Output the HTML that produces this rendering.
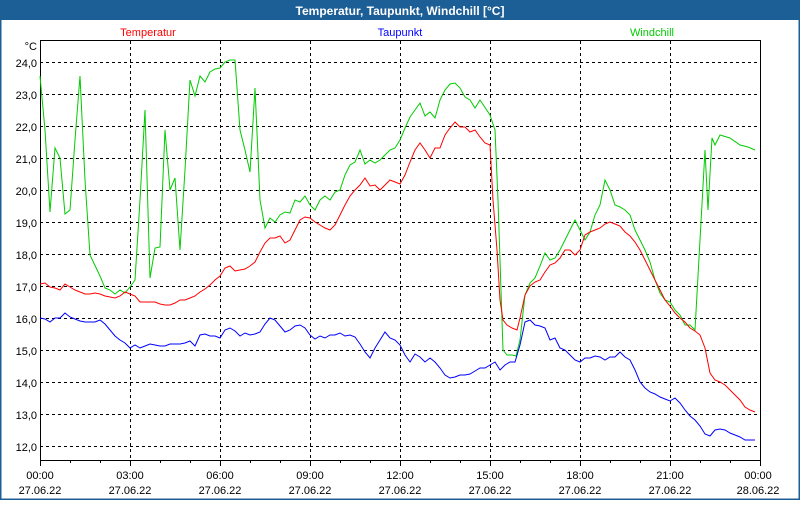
<!DOCTYPE html>
<html><head><meta charset="utf-8"><style>
html,body{margin:0;padding:0;background:#fff;}
body{width:800px;height:500px;overflow:hidden;font-family:"Liberation Sans","DejaVu Sans",sans-serif;}
</style></head><body>
<svg width="800" height="500" xmlns="http://www.w3.org/2000/svg" font-family="Liberation Sans, DejaVu Sans, sans-serif">
<rect x="0" y="0" width="800" height="500" fill="#fff"/>
<rect x="0.5" y="0.5" width="799" height="499" fill="none" stroke="#1c5e96" stroke-width="2"/>
<rect x="0" y="0" width="800" height="20" fill="#1c5e96"/>
<text x="400" y="15" text-anchor="middle" fill="#fff" font-size="12" font-weight="bold">Temperatur, Taupunkt, Windchill [°C]</text>
<text x="148" y="36" text-anchor="middle" fill="#ff0000" font-size="11">Temperatur</text>
<text x="400" y="36" text-anchor="middle" fill="#0000ff" font-size="11">Taupunkt</text>
<text x="652" y="36" text-anchor="middle" fill="#00cc00" font-size="11">Windchill</text>
<g stroke="#000" stroke-width="1" stroke-dasharray="3,3">
<line x1="40" y1="62.5" x2="760" y2="62.5"/><line x1="40" y1="94.5" x2="760" y2="94.5"/><line x1="40" y1="126.5" x2="760" y2="126.5"/><line x1="40" y1="158.5" x2="760" y2="158.5"/><line x1="40" y1="190.5" x2="760" y2="190.5"/><line x1="40" y1="222.5" x2="760" y2="222.5"/><line x1="40" y1="254.5" x2="760" y2="254.5"/><line x1="40" y1="286.5" x2="760" y2="286.5"/><line x1="40" y1="318.5" x2="760" y2="318.5"/><line x1="40" y1="350.5" x2="760" y2="350.5"/><line x1="40" y1="382.5" x2="760" y2="382.5"/><line x1="40" y1="414.5" x2="760" y2="414.5"/><line x1="40" y1="446.5" x2="760" y2="446.5"/>
<line x1="130.5" y1="41" x2="130.5" y2="460"/><line x1="220.5" y1="41" x2="220.5" y2="460"/><line x1="310.5" y1="41" x2="310.5" y2="460"/><line x1="400.5" y1="41" x2="400.5" y2="460"/><line x1="490.5" y1="41" x2="490.5" y2="460"/><line x1="580.5" y1="41" x2="580.5" y2="460"/><line x1="670.5" y1="41" x2="670.5" y2="460"/>
</g>
<rect x="40.5" y="40.5" width="720" height="420" fill="none" stroke="#000"/>
<g stroke="#000">
<line x1="40.5" y1="460" x2="40.5" y2="466"/><line x1="70.5" y1="460" x2="70.5" y2="463"/><line x1="100.5" y1="460" x2="100.5" y2="463"/><line x1="130.5" y1="460" x2="130.5" y2="466"/><line x1="160.5" y1="460" x2="160.5" y2="463"/><line x1="190.5" y1="460" x2="190.5" y2="463"/><line x1="220.5" y1="460" x2="220.5" y2="466"/><line x1="250.5" y1="460" x2="250.5" y2="463"/><line x1="280.5" y1="460" x2="280.5" y2="463"/><line x1="310.5" y1="460" x2="310.5" y2="466"/><line x1="340.5" y1="460" x2="340.5" y2="463"/><line x1="370.5" y1="460" x2="370.5" y2="463"/><line x1="400.5" y1="460" x2="400.5" y2="466"/><line x1="430.5" y1="460" x2="430.5" y2="463"/><line x1="460.5" y1="460" x2="460.5" y2="463"/><line x1="490.5" y1="460" x2="490.5" y2="466"/><line x1="520.5" y1="460" x2="520.5" y2="463"/><line x1="550.5" y1="460" x2="550.5" y2="463"/><line x1="580.5" y1="460" x2="580.5" y2="466"/><line x1="610.5" y1="460" x2="610.5" y2="463"/><line x1="640.5" y1="460" x2="640.5" y2="463"/><line x1="670.5" y1="460" x2="670.5" y2="466"/><line x1="700.5" y1="460" x2="700.5" y2="463"/><line x1="730.5" y1="460" x2="730.5" y2="463"/><line x1="760.5" y1="460" x2="760.5" y2="466"/>
</g>
<g font-size="11" fill="#000" text-anchor="end">
<text x="37" y="50">°C</text>
<text x="37" y="67">24,0</text><text x="37" y="99">23,0</text><text x="37" y="131">22,0</text><text x="37" y="163">21,0</text><text x="37" y="195">20,0</text><text x="37" y="227">19,0</text><text x="37" y="259">18,0</text><text x="37" y="291">17,0</text><text x="37" y="323">16,0</text><text x="37" y="355">15,0</text><text x="37" y="387">14,0</text><text x="37" y="419">13,0</text><text x="37" y="451">12,0</text>
</g>
<g font-size="11" fill="#000" text-anchor="middle">
<text x="40" y="479">00:00</text><text x="40" y="494">27.06.22</text>
<text x="130" y="479">03:00</text><text x="130" y="494">27.06.22</text>
<text x="220" y="479">06:00</text><text x="220" y="494">27.06.22</text>
<text x="310" y="479">09:00</text><text x="310" y="494">27.06.22</text>
<text x="400" y="479">12:00</text><text x="400" y="494">27.06.22</text>
<text x="490" y="479">15:00</text><text x="490" y="494">27.06.22</text>
<text x="580" y="479">18:00</text><text x="580" y="494">27.06.22</text>
<text x="670" y="479">21:00</text><text x="670" y="494">27.06.22</text>
<text x="758" y="479">00:00</text><text x="758" y="494">28.06.22</text>
</g>
<polyline fill="none" stroke="#00cc00" stroke-width="1" points="40,76 45,130 50,212 55,148 60,158 65,214 70,210 75,140 80,76 85,180 90,255 100,276 105,288 110,290 115,294 120,290 125,293 130,287 135,280 140,200 145,110 150,278 155,248 160,247 165,130 170,190 175,178 180,250 185,170 190,80 195,96 200,76 205,82 210,72 215,69 220,68 225,62 230,60 235,60 240,130 245,150 250,172 255,88 260,200 265,228 270,218 275,222 280,215 285,212 290,213 295,200 300,202 305,196 310,205 315,210 320,200 325,196 330,200 335,192 340,190 345,175 350,165 355,162 360,150 365,164 370,160 375,163 380,160 385,155 390,150 395,148 400,140 405,128 410,117 415,110 420,103 425,116 430,112 435,118 440,100 445,90 450,84 455,83 460,88 465,97 470,100 475,108 480,100 490,115 495,130 498,200 500,260 503,350 507,355 512,355 516,356 520,340 525,295 530,283 535,278 540,266 545,253 550,260 555,258 560,250 565,240 570,230 575,220 580,230 585,240 590,232 595,215 600,205 605,180 610,190 615,205 620,207 625,210 630,215 635,230 640,240 645,250 650,262 655,280 660,293 665,300 670,302 675,310 680,315 685,325 690,325 695,330 700,240 705,150 708,210 712,138 715,145 720,135 730,138 740,145 748,147 755,150"/>
<polyline fill="none" stroke="#ff0000" stroke-width="1" points="40,284 45,283 50,287 55,288 60,290 65,284 70,287 75,290 80,292 85,294 90,294 95,293 100,294 105,296 110,297 115,298 120,296 125,292 130,294 135,296 140,302 145,302 150,302 155,302 160,304 165,305 170,305 175,303 180,300 185,300 190,298 195,296 200,292 205,289 210,285 215,280 220,276 225,268 230,266 235,271 240,270 245,269 250,266 255,262 260,252 265,243 270,238 275,238 280,236 285,243 290,240 295,230 300,220 305,217 310,218 315,222 320,225 325,228 330,230 335,225 340,215 345,205 350,196 355,190 360,185 365,178 370,186 375,185 380,190 385,185 390,180 395,182 400,184 405,175 410,162 415,150 420,143 425,150 430,158 435,148 440,148 445,135 450,128 455,122 460,127 465,127 470,132 475,130 480,137 485,143 490,145 493,200 497,250 500,300 503,320 507,325 512,328 517,330 520,318 525,295 530,286 535,282 540,280 545,272 550,265 555,263 560,258 565,250 570,250 575,255 580,250 585,235 590,232 595,230 600,228 605,224 610,222 615,224 620,226 625,232 630,236 635,242 640,250 645,260 650,270 655,280 660,290 665,300 670,306 675,313 680,318 685,322 690,328 695,331 700,335 705,348 710,373 715,380 720,382 725,385 730,390 735,395 740,400 745,407 750,410 755,412"/>
<polyline fill="none" stroke="#0000ff" stroke-width="1" points="40,318 45,319 50,322 55,318 60,318 65,313 70,317 75,319 80,321 85,322 90,322 95,322 100,320 105,324 110,330 115,336 120,340 125,343 130,348 135,345 140,348 145,346 150,344 155,345 160,346 165,346 170,344 175,344 180,344 185,343 190,341 195,346 200,335 205,334 210,336 215,336 220,338 225,330 230,328 235,331 240,336 245,333 250,335 255,334 260,332 265,324 270,318 275,320 280,326 285,332 290,330 295,326 300,325 305,328 310,335 315,339 320,336 325,338 330,335 335,335 340,333 345,336 350,335 355,337 360,344 365,352 370,358 375,348 380,340 385,332 390,338 395,340 400,345 405,355 410,362 415,354 420,357 425,362 430,358 435,362 440,368 445,375 450,378 455,377 460,375 465,375 470,374 475,371 480,368 485,368 490,365 495,362 500,370 505,365 510,362 515,362 520,345 525,322 530,320 535,325 540,326 545,328 550,340 555,338 560,348 565,350 570,355 575,360 580,362 585,358 590,358 595,356 600,357 605,360 610,357 615,357 620,352 625,357 630,360 635,370 640,382 645,388 650,392 655,394 660,397 665,399 670,401 675,398 680,403 685,410 690,416 695,420 700,426 705,434 710,436 715,430 720,429 725,430 730,433 735,435 740,437 745,440 750,440 755,440"/>
</svg>
</body></html>
